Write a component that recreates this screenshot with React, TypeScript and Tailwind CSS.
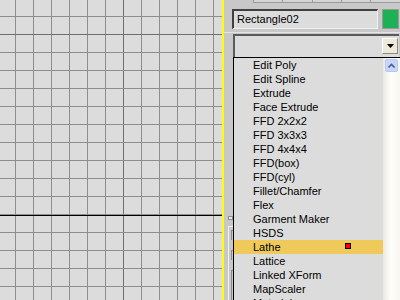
const modifiers = [
  "Edit Poly",
  "Edit Spline",
  "Extrude",
  "Face Extrude",
  "FFD 2x2x2",
  "FFD 3x3x3",
  "FFD 4x4x4",
  "FFD(box)",
  "FFD(cyl)",
  "Fillet/Chamfer",
  "Flex",
  "Garment Maker",
  "HSDS",
  "Lathe",
  "Lattice",
  "Linked XForm",
  "MapScaler",
  "Material",
];

function ViewportGrid() {
  const xs = Array.from({ length: 12 }, (_, i) => 15.5 + i * 18);
  const ys = Array.from({ length: 16 }, (_, i) => 16.5 + i * 18);
  return (
    <svg width="222" height="300" className="block">
      <rect width="222" height="300" fill="#dcdcdc" />
      {xs.map((x) => (
        <line key={`x${x}`} x1={x} y1="0" x2={x} y2="300" stroke={x === 123.5 ? "#6f6f6f" : "#8e8e8e"} strokeWidth="1" />
      ))}
      {ys.map((y) => (
        <line key={`y${y}`} x1="0" y1={y} x2="222" y2={y} stroke={y === 34.5 ? "#6f6f6f" : "#8e8e8e"} strokeWidth="1" />
      ))}
      <line x1="0" y1="215.5" x2="222" y2="215.5" stroke="#000" strokeWidth="1" />
    </svg>
  );
}

function ModifierList() {
  return (
    <div className="absolute left-[9px] top-[57px] flex h-[243px] w-[167px] border-l border-t border-black bg-[#dcdcdc]">
      <ul className="flex-1">
        {modifiers.map((m) => (
          <li
            key={m}
            className={`relative flex h-[14px] items-center pl-[19px] text-[11px] leading-none text-black ${
              m === "Lathe" ? "bg-[#efca5b]" : ""
            }`}
          >
            {m}
            {m === "Lathe" ? (
              <span className="absolute left-[111px] top-[3px] h-[6px] w-[6px] border border-black bg-[#ff0000]" />
            ) : null}
          </li>
        ))}
      </ul>
      <div className="w-[17px] bg-[linear-gradient(to_right,#ebe9df,#fefefd_45%,#f7f6f0)] pt-px pl-[2px]">
        <div className="flex h-[13px] w-[13px] items-center justify-center rounded-[2px] border border-[#b9c9ef] bg-[#c6d5fb]">
          <svg width="7" height="5" viewBox="0 0 7 5">
            <path d="M0.5 4.5 L3.5 1.5 L6.5 4.5" fill="none" stroke="#4d6185" strokeWidth="1.6" />
          </svg>
        </div>
      </div>
    </div>
  );
}

export default function App() {
  return (
    <div className="flex h-[300px] w-[400px] overflow-hidden font-['Liberation_Sans',Arial,sans-serif]">
      <ViewportGrid />
      <div className="w-[2px] bg-[#ffff00]" />
      <div className="relative flex w-[176px] flex-col bg-[#c8c8c8]">
        <div className="flex h-[3px]">
          <div className="w-[30px] border-r border-[#9a9a9a] bg-[#c8c8c8]" />
          <div className="w-[29px] border-r border-b border-[#9a9a9a] bg-[#d4d4d4]" />
          <div className="w-[30px] border-r border-b border-[#9a9a9a] bg-[#d4d4d4]" />
          <div className="w-[29px] border-r border-b border-[#9a9a9a] bg-[#d4d4d4]" />
          <div className="w-[29px] border-r border-b border-[#9a9a9a] bg-[#d4d4d4]" />
          <div className="flex-1 border-b border-[#9a9a9a] bg-[#d4d4d4]" />
        </div>

        <div className="mt-[6px] flex items-start gap-[4px] pl-[8px]">
          <div className="flex h-[20px] w-[146px] items-center border-t-2 border-l-2 border-r border-b border-t-[#404040] border-l-[#404040] border-r-[#f0f0f0] border-b-[#f0f0f0] bg-[#dcdcdc] pl-[3px] text-[11px] text-black">
            Rectangle02
          </div>
          <div className="h-[20px] w-[17px] border border-[#9a9a9a] bg-[#1eb055]" />
        </div>

        <div className="mt-[3px] h-px bg-[#e4e4e4]" />

        <div className="ml-[9px] mt-px flex h-[24px] w-[166px] items-start justify-end border-t-2 border-l-2 border-t-[#5a5a5a] border-l-[#5a5a5a] bg-[#dcdcdc] pt-[2px] pr-[1px]">
          <div className="flex h-[16px] w-[16px] items-center justify-center border border-r-[#8a8a80] border-b-[#8a8a80] border-t-white border-l-white bg-[#ece9d8]">
            <svg width="7" height="4" viewBox="0 0 7 4">
              <path d="M0 0 H7 L3.5 4 Z" fill="#000" />
            </svg>
          </div>
        </div>

        <div className="absolute left-[4px] top-[216px] h-[4px] w-[5px] border border-[#8a8a8a] bg-[#e8e8e8]" />
        <div className="absolute left-[4px] top-[226px] h-[74px] w-[5px] border-l border-t border-[#f0f0f0]" />
        <div className="absolute left-[7px] top-[230px] h-[10px] w-[2px] border-l border-t border-[#8a8a8a]" />
        <div className="absolute left-[7px] top-[250px] h-[10px] w-[2px] border-l border-t border-[#8a8a8a]" />
        <div className="absolute left-[7px] top-[270px] h-[30px] w-[2px] border-l border-t border-[#8a8a8a]" />

        <ModifierList />
      </div>
    </div>
  );
}
